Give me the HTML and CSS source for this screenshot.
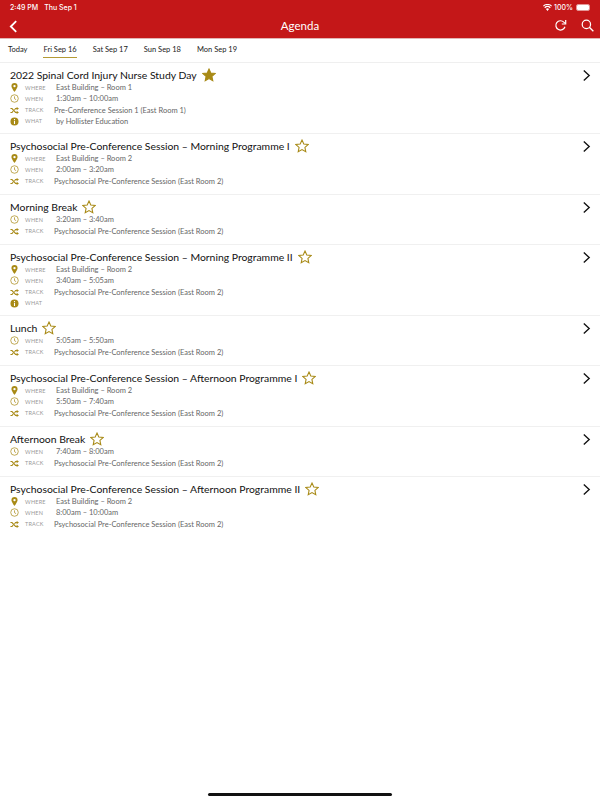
FILE: index.html
```html
<!DOCTYPE html>
<html lang="en">
<head>
<meta charset="utf-8">
<title>Agenda</title>
<link rel="stylesheet" href="styles.css">
</head>
<body>
<svg class="defs" width="0" height="0" aria-hidden="true">
  <defs>
    <symbol id="pin" viewBox="0 0 10 10"><path fill-rule="evenodd" d="M5 0a3.4 3.4 0 0 0-3.4 3.4C1.600 5.800 5 10 5 10s3.400-4.200 3.400-6.600A3.400 3.400 0 0 0 5 0zm0 2.100a1.300 1.300 0 1 1 0 2.600 1.300 1.300 0 0 1 0-2.600z"/></symbol>
    <symbol id="clock" viewBox="0 0 10 10"><circle cx="5" cy="5" r="4.200" fill="none" stroke="currentColor" stroke-width=".8"/><path d="M5 2.600V5.200L6.800 6.300" fill="none" stroke="currentColor" stroke-width=".8"/></symbol>
    <symbol id="shuffle" viewBox="0 0 10 10"><path d="M.5 2.800h1.700l4 4.400h1.500M.5 7.200h1.700l1.300-1.500M5 4.200l1.200-1.400h1.500" fill="none" stroke="currentColor" stroke-width="1.200"/><path d="M7.400 1 9.900 2.800 7.400 4.600zM7.400 5.400 9.900 7.200 7.400 9z"/></symbol>
    <symbol id="info" viewBox="0 0 10 10"><path fill-rule="evenodd" d="M5 .5a4.500 4.500 0 1 0 0 9A4.500 4.500 0 0 0 5 .5zM4.400 2.200h1.200v1.200H4.400zM4.400 4.300h1.200v3.500H4.400z"/></symbol>
    <symbol id="star" viewBox="0 0 24 24"><path d="M12 1.800l3.100 6.900 7.400.8-5.500 5 1.500 7.400-6.500-3.800-6.500 3.800L7 14.500l-5.500-5 7.400-.8z"/></symbol>
    <symbol id="chev" viewBox="0 0 10 14"><path d="M2 1.500 8 7 2 12.500" fill="none" stroke="currentColor" stroke-width="1.500"/></symbol>
  </defs>
</svg>

<header class="appbar">
  <div class="status">
    <span class="status-time">2:49 PM</span>
    <span class="status-date">Thu Sep 1</span>
    <span class="status-right">
      <svg class="wifi" viewBox="0 0 12 9" width="9" height="7"><path d="M6 9 3.900 6.500a3 3 0 0 1 4.200 0zM2.900 5.400 1.700 4a6.200 6.200 0 0 1 8.600 0L9.100 5.400a4.500 4.500 0 0 0-6.200 0zM1 3.200 0 2a9 9 0 0 1 12 0L11 3.200a7.400 7.400 0 0 0-10 0z"/></svg>
      <span>100%</span>
      <span class="battery"><span class="battery-fill"></span></span>
    </span>
  </div>
  <div class="nav">
    <svg class="nav-back" viewBox="0 0 10 14" width="9" height="13"><path d="M8 1 2 7l6 6" fill="none" stroke="#fff" stroke-width="2"/></svg>
    <h1 class="nav-title">Agenda</h1>
    <div class="nav-actions">
      <svg viewBox="0 0 14 14" width="13" height="13"><path d="M11.800 8.300A5 5 0 1 1 10.600 3.400L12 4.700" fill="none" stroke="#fff" stroke-width="1.300"/><path d="M12.600 1.200v4.200H8.400" fill="none" stroke="#fff" stroke-width="1.300"/></svg>
      <svg viewBox="0 0 14 14" width="13" height="13"><circle cx="5.800" cy="5.800" r="4.500" fill="none" stroke="#fff" stroke-width="1.300"/><path d="M9 9l4.300 4.300" stroke="#fff" stroke-width="1.500"/></svg>
    </div>
  </div>
</header>

<nav class="tabs">
  <span class="tab">Today</span>
  <span class="tab tab-active">Fri Sep 16</span>
  <span class="tab">Sat Sep 17</span>
  <span class="tab">Sun Sep 18</span>
  <span class="tab">Mon Sep 19</span>
</nav>

<main class="list">
  <article class="item">
    <div class="item-body">
      <h2 class="title">2022 Spinal Cord Injury Nurse Study Day <svg class="star star-on"><use href="#star"/></svg></h2>
      <div class="row"><svg class="ico"><use href="#pin"/></svg><span class="lab">WHERE</span><span class="val">East Building – Room 1</span></div>
      <div class="row"><svg class="ico"><use href="#clock"/></svg><span class="lab">WHEN</span><span class="val">1:30am – 10:00am</span></div>
      <div class="row row-track"><svg class="ico"><use href="#shuffle"/></svg><span class="lab">TRACK</span><span class="val val-track">Pre-Conference Session 1 (East Room 1)</span></div>
      <div class="row"><svg class="ico"><use href="#info"/></svg><span class="lab">WHAT</span><span class="val">by Hollister Education</span></div>
    </div>
    <svg class="chev"><use href="#chev"/></svg>
  </article>

  <article class="item">
    <div class="item-body">
      <h2 class="title">Psychosocial Pre-Conference Session – Morning Programme I <svg class="star"><use href="#star"/></svg></h2>
      <div class="row"><svg class="ico"><use href="#pin"/></svg><span class="lab">WHERE</span><span class="val">East Building – Room 2</span></div>
      <div class="row"><svg class="ico"><use href="#clock"/></svg><span class="lab">WHEN</span><span class="val">2:00am – 3:20am</span></div>
      <div class="row row-track"><svg class="ico"><use href="#shuffle"/></svg><span class="lab">TRACK</span><span class="val val-track">Psychosocial Pre-Conference Session (East Room 2)</span></div>
    </div>
    <svg class="chev"><use href="#chev"/></svg>
  </article>

  <article class="item">
    <div class="item-body">
      <h2 class="title">Morning Break <svg class="star"><use href="#star"/></svg></h2>
      <div class="row"><svg class="ico"><use href="#clock"/></svg><span class="lab">WHEN</span><span class="val">3:20am – 3:40am</span></div>
      <div class="row row-track"><svg class="ico"><use href="#shuffle"/></svg><span class="lab">TRACK</span><span class="val val-track">Psychosocial Pre-Conference Session (East Room 2)</span></div>
    </div>
    <svg class="chev"><use href="#chev"/></svg>
  </article>

  <article class="item">
    <div class="item-body">
      <h2 class="title">Psychosocial Pre-Conference Session – Morning Programme II <svg class="star"><use href="#star"/></svg></h2>
      <div class="row"><svg class="ico"><use href="#pin"/></svg><span class="lab">WHERE</span><span class="val">East Building – Room 2</span></div>
      <div class="row"><svg class="ico"><use href="#clock"/></svg><span class="lab">WHEN</span><span class="val">3:40am – 5:05am</span></div>
      <div class="row row-track"><svg class="ico"><use href="#shuffle"/></svg><span class="lab">TRACK</span><span class="val val-track">Psychosocial Pre-Conference Session (East Room 2)</span></div>
      <div class="row"><svg class="ico"><use href="#info"/></svg><span class="lab">WHAT</span></div>
    </div>
    <svg class="chev"><use href="#chev"/></svg>
  </article>

  <article class="item">
    <div class="item-body">
      <h2 class="title">Lunch <svg class="star"><use href="#star"/></svg></h2>
      <div class="row"><svg class="ico"><use href="#clock"/></svg><span class="lab">WHEN</span><span class="val">5:05am – 5:50am</span></div>
      <div class="row row-track"><svg class="ico"><use href="#shuffle"/></svg><span class="lab">TRACK</span><span class="val val-track">Psychosocial Pre-Conference Session (East Room 2)</span></div>
    </div>
    <svg class="chev"><use href="#chev"/></svg>
  </article>

  <article class="item">
    <div class="item-body">
      <h2 class="title">Psychosocial Pre-Conference Session – Afternoon Programme I <svg class="star"><use href="#star"/></svg></h2>
      <div class="row"><svg class="ico"><use href="#pin"/></svg><span class="lab">WHERE</span><span class="val">East Building – Room 2</span></div>
      <div class="row"><svg class="ico"><use href="#clock"/></svg><span class="lab">WHEN</span><span class="val">5:50am – 7:40am</span></div>
      <div class="row row-track"><svg class="ico"><use href="#shuffle"/></svg><span class="lab">TRACK</span><span class="val val-track">Psychosocial Pre-Conference Session (East Room 2)</span></div>
    </div>
    <svg class="chev"><use href="#chev"/></svg>
  </article>

  <article class="item">
    <div class="item-body">
      <h2 class="title">Afternoon Break <svg class="star"><use href="#star"/></svg></h2>
      <div class="row"><svg class="ico"><use href="#clock"/></svg><span class="lab">WHEN</span><span class="val">7:40am – 8:00am</span></div>
      <div class="row row-track"><svg class="ico"><use href="#shuffle"/></svg><span class="lab">TRACK</span><span class="val val-track">Psychosocial Pre-Conference Session (East Room 2)</span></div>
    </div>
    <svg class="chev"><use href="#chev"/></svg>
  </article>

  <article class="item item-last">
    <div class="item-body">
      <h2 class="title">Psychosocial Pre-Conference Session – Afternoon Programme II <svg class="star"><use href="#star"/></svg></h2>
      <div class="row"><svg class="ico"><use href="#pin"/></svg><span class="lab">WHERE</span><span class="val">East Building – Room 2</span></div>
      <div class="row"><svg class="ico"><use href="#clock"/></svg><span class="lab">WHEN</span><span class="val">8:00am – 10:00am</span></div>
      <div class="row row-track"><svg class="ico"><use href="#shuffle"/></svg><span class="lab">TRACK</span><span class="val val-track">Psychosocial Pre-Conference Session (East Room 2)</span></div>
    </div>
    <svg class="chev"><use href="#chev"/></svg>
  </article>
</main>

<div class="home-indicator"></div>
</body>
</html>
```

FILE: styles.css
```css
* { box-sizing: border-box; }
html, body { margin: 0; padding: 0; }
body {
  width: 600px;
  height: 800px;
  background: #fff;
  color: #111;
  font-family: Lato, "Open Sans", sans-serif;
  overflow: hidden;
  position: relative;
}
.defs { position: absolute; }

.appbar {
  height: 39px;
  background: #c41718;
  color: #fff;
  border-bottom: 1px solid #e2b5b5;
}
.status {
  height: 13px;
  padding: 2px 10px 0 10px;
  display: flex;
  align-items: center;
  font-family: Inter, "Liberation Sans", sans-serif;
  font-size: 7px;
  font-weight: 500;
  line-height: 10px;
}
.status-date { margin-left: 6px; }
.status-right { margin-left: auto; display: flex; align-items: center; gap: 2px; }
.wifi { fill: #fff; }
.battery {
  width: 14px;
  height: 7px;
  margin-left: 1px;
  border: 1px solid rgba(255,255,255,.55);
  border-radius: 2px;
  display: flex;
}
.battery-fill { flex: 1; background: #fff; border-radius: 1px; }

.nav {
  height: 25px;
  position: relative;
  display: flex;
  align-items: center;
  justify-content: center;
}
.nav-back { position: absolute; left: 9px; top: 7px; }
.nav-title { margin: 0; font-size: 11.500px; font-weight: 400; color: #fff; }
.nav-actions {
  position: absolute;
  right: 6px;
  top: 6px;
  display: flex;
  gap: 14px;
}

.tabs {
  height: 24px;
  padding-left: 8px;
  display: flex;
  gap: 16px;
  border-bottom: 1px solid #efefef;
  font-size: 7.500px;
  color: #222;
}
.tab { height: 19px; line-height: 22px; }
.tab-active { border-bottom: 1px solid #b49a35; }

.item {
  display: flex;
  justify-content: space-between;
  padding: 4px 9px 7px 10px;
  border-bottom: 1px solid #f0f0f0;
}
.item-last { border-bottom: 0; }
.item-body { min-width: 0; }
.title {
  margin: 0 0 -1px;
  height: 16px;
  font-size: 10.400px;
  font-weight: 400;
  line-height: 16px;
  color: #111;
  display: flex;
  align-items: center;
  gap: 5px;
  white-space: nowrap;
}
.star { width: 14px; height: 14px; fill: none; stroke: #a88a16; stroke-width: 1.800; }
.star-on { fill: #a88a16; }
.row {
  height: 11px;
  display: flex;
  align-items: center;
  font-size: 7.500px;
  color: #666;
  white-space: nowrap;
}
.row-track { height: 12px; }
.row-track + .row { height: 10px; }
.ico { width: 9px; height: 9px; margin-right: 6px; fill: #a88a16; color: #a88a16; flex: none; }
.lab { width: 31px; font-size: 5.500px; color: #999; letter-spacing: .2px; flex: none; }
.val-track { margin-left: -2px; }
.chev { width: 9px; height: 13px; margin-top: 2px; color: #111; flex: none; }

.home-indicator {
  position: absolute;
  left: 208px;
  bottom: 4px;
  width: 184px;
  height: 3px;
  border-radius: 2px;
  background: #111;
}
```
